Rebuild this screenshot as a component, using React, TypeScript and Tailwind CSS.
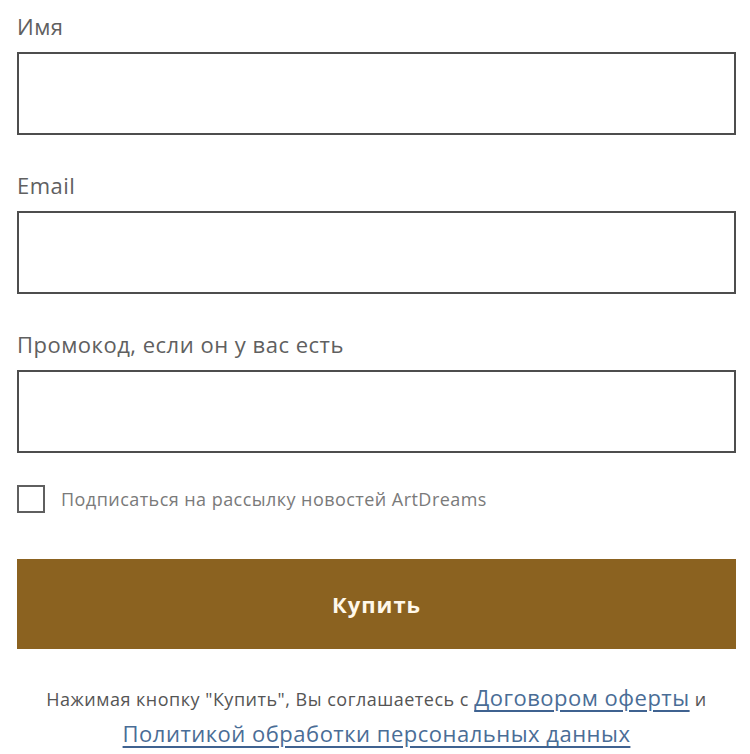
import React, { useState } from "react";

const Field: React.FC<{ label: string; first?: boolean }> = ({ label, first }) => (
  <div className={first ? "" : "mt-[35px]"}>
    <label className="block text-[22px] leading-[30px] tracking-[0.5px] text-[#606060]">{label}</label>
    <input
      type="text"
      className="mt-[11px] block h-[83px] w-full border-2 border-[#4d4d4d] bg-white px-4 text-[20px] text-[#333] outline-none"
    />
  </div>
);

export default function App() {
  const [subscribe, setSubscribe] = useState(false);

  return (
    <div
      className="min-h-[754px] w-[750px] bg-white"
      style={{ fontFamily: '"Open Sans", "Noto Sans", sans-serif' }}
    >
      <div className="ml-[17px] w-[719px] pt-[11px]">
        <Field label="Имя" first />
        <Field label="Email" />
        <Field label="Промокод, если он у вас есть" />

        {/* Subscribe */}
        <label className="mt-[32px] flex cursor-pointer items-center gap-4">
          <input
            type="checkbox"
            checked={subscribe}
            onChange={(e) => setSubscribe(e.target.checked)}
            className="peer sr-only"
          />
          <span className="block h-[28px] w-[28px] border-2 border-[#5f5f5f] bg-white" />
          <span className="text-[18px] leading-[28px] tracking-[0.45px] text-[#7a7a7a]">
            Подписаться на рассылку новостей ArtDreams
          </span>
        </label>

        <button className="mt-[46px] flex h-[90px] w-full items-center justify-center bg-[#8b6220] text-[22px] font-bold tracking-[1px] text-[#fff8ea]">
          Купить
        </button>

        <p className="mt-[31px] text-center text-[18px] leading-[34px] tracking-[0.5px] text-[#555]">
          Нажимая кнопку "Купить", Вы соглашаетесь с{" "}
          <a href="#" className="text-[22px] text-[#4a6d96] underline decoration-[#3f6290] underline-offset-4">
            Договором оферты
          </a>{" "}
          и
          <br />
          <a href="#" className="text-[22px] text-[#4a6d96] underline decoration-[#3f6290] underline-offset-4">
            Политикой обработки персональных данных
          </a>
        </p>
      </div>
    </div>
  );
}
